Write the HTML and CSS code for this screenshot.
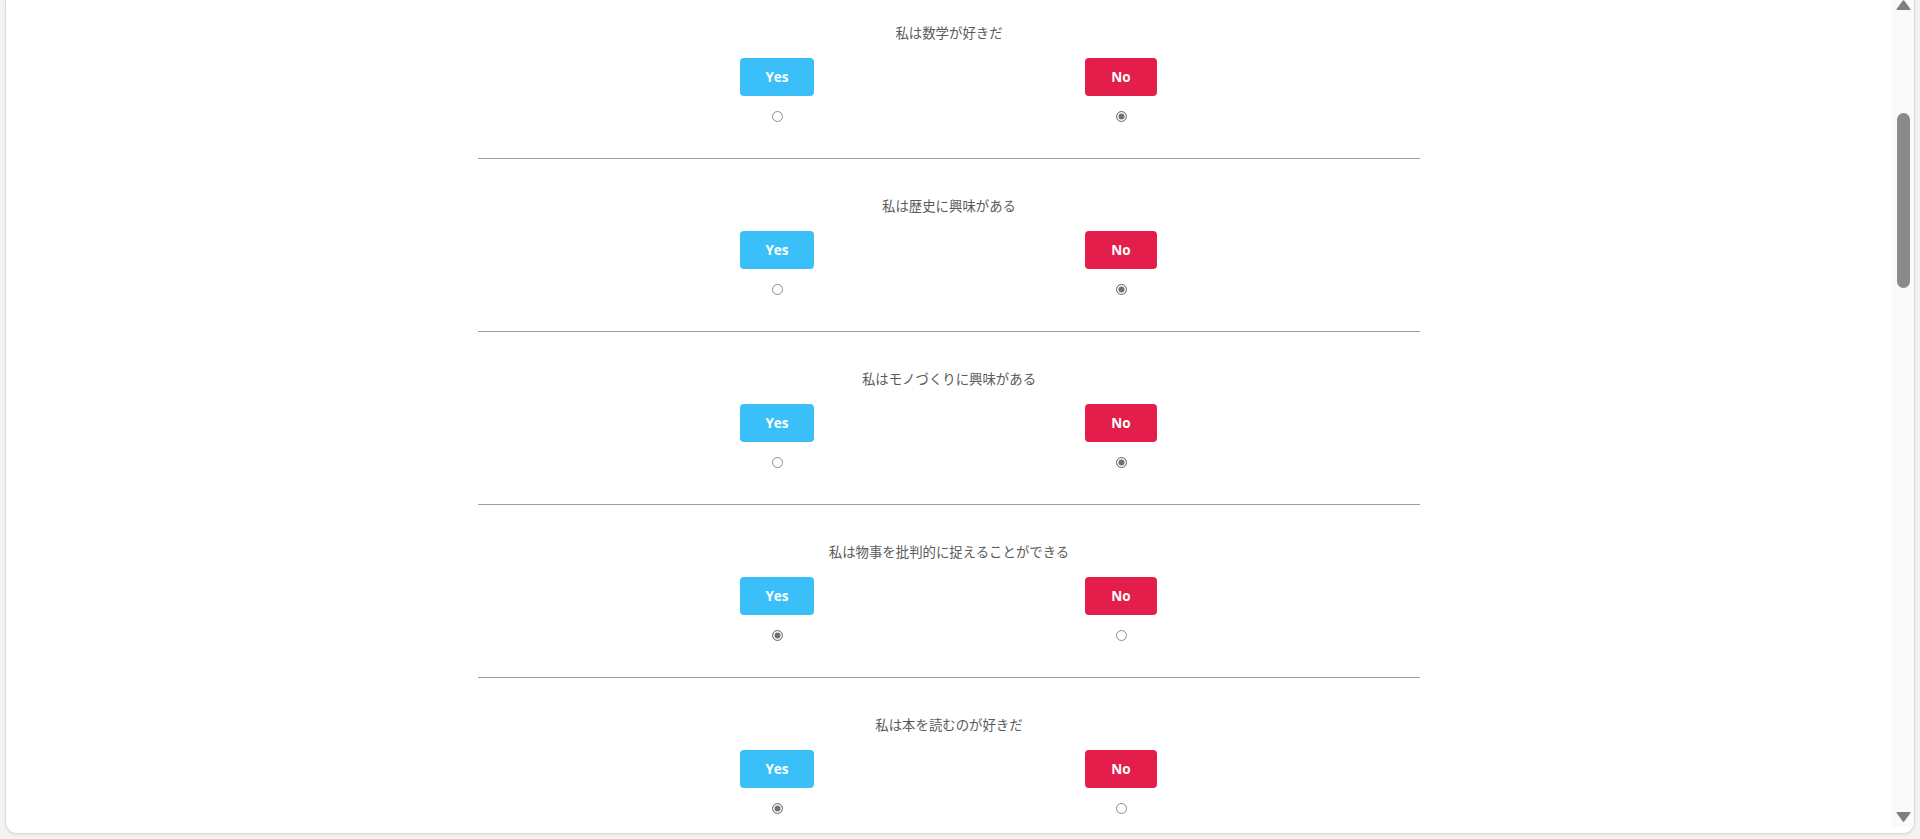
FILE: index.html
```html
<!DOCTYPE html>
<html lang="ja">
<head>
<meta charset="utf-8">
<title>Questions</title>
<link rel="stylesheet" href="styles.css">
</head>
<body>
<div class="card">
  <div class="scroller" id="scroller">
    <div class="list">
      <section class="q">
        <p class="q-text">私は数学が好きだ</p>
        <div class="options">
          <div class="opt"><button class="btn btn-yes">Yes</button><input class="radio" type="radio" name="q1"></div>
          <div class="opt"><button class="btn btn-no">No</button><input class="radio" type="radio" name="q1" checked></div>
        </div>
      </section>
      <section class="q">
        <p class="q-text">私は歴史に興味がある</p>
        <div class="options">
          <div class="opt"><button class="btn btn-yes">Yes</button><input class="radio" type="radio" name="q2"></div>
          <div class="opt"><button class="btn btn-no">No</button><input class="radio" type="radio" name="q2" checked></div>
        </div>
      </section>
      <section class="q">
        <p class="q-text">私はモノづくりに興味がある</p>
        <div class="options">
          <div class="opt"><button class="btn btn-yes">Yes</button><input class="radio" type="radio" name="q3"></div>
          <div class="opt"><button class="btn btn-no">No</button><input class="radio" type="radio" name="q3" checked></div>
        </div>
      </section>
      <section class="q">
        <p class="q-text">私は物事を批判的に捉えることができる</p>
        <div class="options">
          <div class="opt"><button class="btn btn-yes">Yes</button><input class="radio" type="radio" name="q4" checked></div>
          <div class="opt"><button class="btn btn-no">No</button><input class="radio" type="radio" name="q4"></div>
        </div>
      </section>
      <section class="q">
        <p class="q-text">私は本を読むのが好きだ</p>
        <div class="options">
          <div class="opt"><button class="btn btn-yes">Yes</button><input class="radio" type="radio" name="q5" checked></div>
          <div class="opt"><button class="btn btn-no">No</button><input class="radio" type="radio" name="q5"></div>
        </div>
      </section>
    </div>
  </div>
  <div class="scrollbar">
    <svg class="arrow" width="15" height="10" viewBox="0 0 15 10"><path d="M6.6 0.8 Q7.5 -0.2 8.4 0.8 L14.6 9.2 Q15 10 14 10 L1 10 Q0 10 0.4 9.2 Z" fill="#7f7f7f"/></svg>
    <div class="thumb"></div>
    <div class="spacer"></div>
    <svg class="arrow" width="15" height="10" viewBox="0 0 15 10"><path d="M6.6 9.2 Q7.5 10.2 8.4 9.2 L14.6 0.8 Q15 0 14 0 L1 0 Q0 0 0.4 0.8 Z" fill="#7f7f7f"/></svg>
  </div>
</div>
<script src="script.js"></script>
</body>
</html>
```

FILE: styles.css
```css
* { box-sizing: border-box; }
html, body { margin: 0; height: 100%; }
body {
  background: #f3f3f3;
  font-family: "Noto Sans CJK JP", "Noto Sans", sans-serif;
  overflow: hidden;
}
.card {
  height: calc(100vh - 5px);
  margin: 0 5px;
  background: #fff;
  border: 1px solid #dcdcdc;
  border-top: none;
  border-radius: 0 0 12px 12px;
  box-shadow: 0 1px 3px rgba(0, 0, 0, 0.07);
  display: flex;
  overflow: hidden;
}
.scroller {
  flex: 1;
  overflow: hidden;
  position: relative;
}
.list {
  width: 942px;
  margin: 0 auto;
}
.q {
  padding: 36px 0 36px;
  border-bottom: 1px solid #9a9cb0;
  display: flex;
  flex-direction: column;
  align-items: center;
}
.q-text {
  margin: 0 0 16px;
  font-size: 13.4px;
  line-height: 20px;
  color: #5a5a5a;
}
.options {
  display: grid;
  grid-template-columns: 344px 344px;
}
.opt {
  display: flex;
  flex-direction: column;
  align-items: center;
}
.btn {
  height: 38px;
  padding: 0 26px;
  border: none;
  border-radius: 4px;
  color: #fff;
  font-family: "Open Sans", "Noto Sans", sans-serif;
  font-weight: 700;
  font-size: 13.5px;
  cursor: pointer;
}
.btn-yes { background: #3bbff9; padding: 0 25px; }
.btn-no { background: #e31e4a; }
.radio {
  -webkit-appearance: none;
  appearance: none;
  width: 11px;
  height: 11px;
  margin: 15px 0 0;
  border: 1px solid #8c8c8c;
  border-radius: 50%;
  background: #fff;
}
.radio:checked {
  background: #707070;
  border-color: #7a7a7a;
  box-shadow: inset 0 0 0 1.5px #fff;
}
.scrollbar {
  width: 22px;
  background: #fafafa;
  display: flex;
  flex-direction: column;
  align-items: center;
  padding-bottom: 5px;
  margin-bottom: 6px;
}
.arrow { display: block; flex: none; }
.thumb {
  width: 13px;
  height: 175px;
  margin-top: 103px;
  border-radius: 7px;
  background: #8a8a8a;
  flex: none;
}
.spacer { flex: 1; }
```

FILE: script.js
```js
document.getElementById('scroller').scrollTop = 14;
```
